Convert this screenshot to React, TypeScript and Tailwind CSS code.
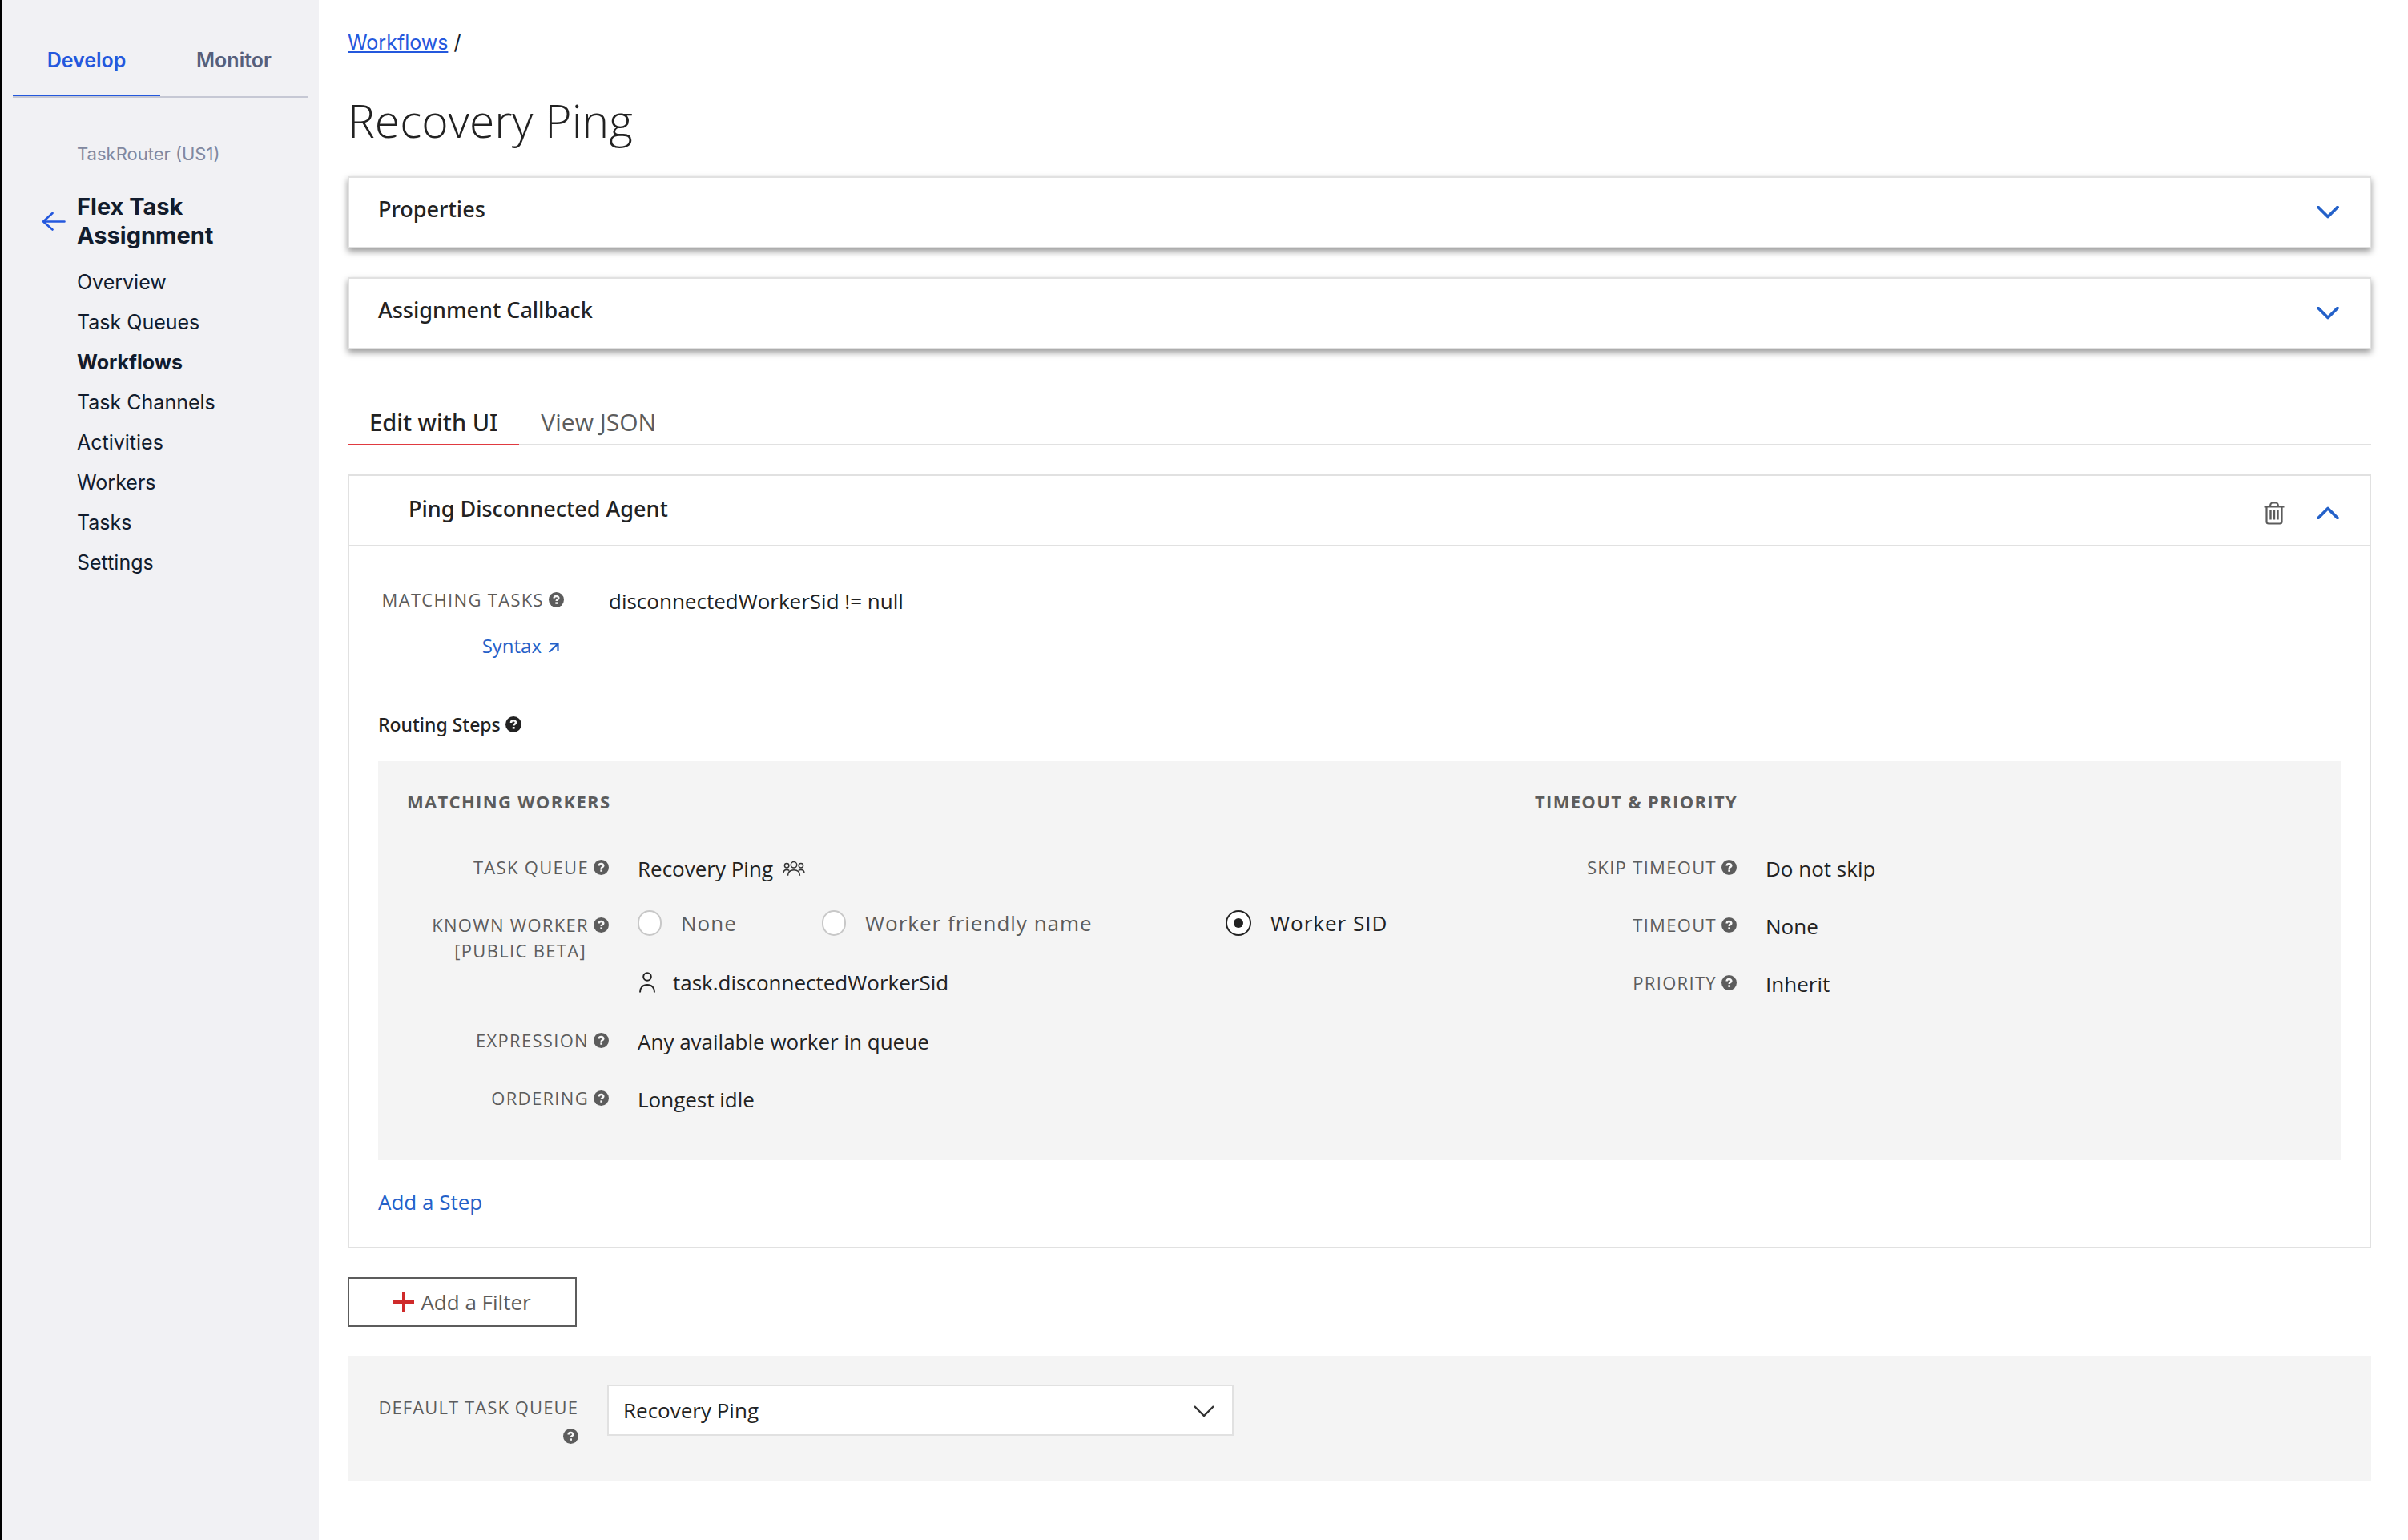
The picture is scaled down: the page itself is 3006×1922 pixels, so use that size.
import { useState, type ReactNode } from "react";

const navItems = [
  "Overview",
  "Task Queues",
  "Workflows",
  "Task Channels",
  "Activities",
  "Workers",
  "Tasks",
  "Settings",
];

function HelpIcon({ className = "size-[19px]" }: { className?: string }) {
  return (
    <svg viewBox="0 0 20 20" className={`inline-block shrink-0 ${className}`} role="img" aria-label="Help">
      <circle cx="10" cy="10" r="10" fill="currentColor" />
      <path
        d="M7 8C7 6.200 8.200 5.300 10 5.300s3 .9 3 2.300c0 1.200-.8 1.700-1.600 2.200-.8.500-1.200.9-1.200 1.800"
        fill="none"
        stroke="#f7f7f7"
        strokeWidth="2.600"
      />
      <rect x="8.800" y="13" width="2.800" height="2.600" fill="#f7f7f7" />
    </svg>
  );
}

function Chevron({ up = false }: { up?: boolean }) {
  return (
    <svg viewBox="0 0 28 16" className="h-4 w-7 shrink-0" aria-hidden="true">
      <path
        d={up ? "M2 14.5 14 2.5l12 12" : "M2 1.5l12 12 12-12"}
        fill="none"
        stroke="#2461c9"
        strokeWidth="3.800"
        strokeLinecap="round"
        strokeLinejoin="round"
      />
    </svg>
  );
}

function TrashIcon() {
  return (
    <svg viewBox="0 0 26 30" className="h-[30px] w-[26px]" fill="none" stroke="#5c5c5c" strokeWidth="2.200" aria-hidden="true">
      <path d="M.5 7.500h25M3.500 7.500V26q0 2.500 2.500 2.500h14q2.500 0 2.500-2.500V7.500" />
      <path d="M8 7.500q0-5 3-5h4q3 0 3 5" />
      <path d="M8.500 12v11.500M13 12v11.500M17.500 12v11.500" strokeWidth="2.400" />
    </svg>
  );
}

function PersonIcon() {
  return (
    <svg viewBox="0 0 20 26" className="h-[26px] w-5 shrink-0" fill="none" stroke="#222" strokeWidth="2" aria-hidden="true">
      <circle cx="10" cy="6" r="4.800" />
      <path d="M1 25.500c0-6 3.500-9.500 9-9.500s9 3.500 9 9.500" />
    </svg>
  );
}

function PeopleIcon() {
  return (
    <svg viewBox="0 0 30 20" className="h-5 w-7 shrink-0" fill="none" stroke="#333" strokeWidth="1.600" aria-hidden="true">
      <circle cx="15" cy="5" r="4" />
      <circle cx="5.500" cy="6" r="2.900" />
      <circle cx="24.500" cy="6" r="2.900" />
      <path d="M7 19.500c0-5 3-7.500 8-7.500s8 2.500 8 7.500" />
      <path d="M1 16.500c0-3 1.500-5 4.500-5 1.500 0 2.500.4 3.300 1.200M29 16.500c0-3-1.500-5-4.500-5-1.500 0-2.500.4-3.300 1.200" />
    </svg>
  );
}

function ClosedCard({ title }: { title: string }) {
  return (
    <button
      type="button"
      aria-expanded="false"
      className="flex h-[90px] w-full items-center justify-between border-2 border-[#e1e1e1] bg-white pr-[38px] pl-9 text-left shadow-[0_4px_8px_rgba(0,0,0,0.4)]"
    >
      <span className="pb-2 font-['Noto_Sans',sans-serif] text-[27px] leading-9 font-medium text-[#222]">{title}</span>
      <Chevron />
    </button>
  );
}

function Label({ children }: { children: ReactNode }) {
  return (
    <span className="block text-[22px] leading-8 tracking-[0.06em] whitespace-nowrap text-[#5c5c5c] uppercase">
      {children}
    </span>
  );
}

function Field({ label, note, children }: { label: string; note?: string; children: ReactNode }) {
  return (
    <div className="flex items-start gap-9">
      <dt className="w-[252px] shrink-0 text-right">
        <Label>
          <span className="flex items-center justify-end gap-1.5">
            {label}
            <HelpIcon />
          </span>
        </Label>
        {note && (
          <Label>
            <span className="pr-7">{note}</span>
          </Label>
        )}
      </dt>
      <dd className="min-w-0 flex-1 text-[26px] leading-9 text-[#222]">{children}</dd>
    </div>
  );
}

function Radio({
  name,
  label,
  checked,
  onChange,
}: {
  name: string;
  label: string;
  checked: boolean;
  onChange: () => void;
}) {
  return (
    <label
      className={`flex h-7 items-center gap-6 text-[26px] tracking-[1px] whitespace-nowrap ${
        checked ? "text-[#222]" : "text-[#5c5c5c]"
      }`}
    >
      <input
        type="radio"
        name={name}
        checked={checked}
        onChange={onChange}
        className="grid h-8 w-[30px] shrink-0 appearance-none place-items-center rounded-full border-2 border-[#c8c8c8] bg-white before:size-3 before:rounded-full checked:w-8 checked:border-[#222] checked:before:bg-[#222]"
      />
      {label}
    </label>
  );
}

function Sidebar() {
  return (
    <aside className="w-[398px] shrink-0 border-l-2 border-black bg-[#f1f1f4] px-3.5 font-[Inter,sans-serif] text-[#121c2d]">
      <div role="tablist" className="flex border-b-2 border-[#c6c8d4] text-[25px] leading-10 font-semibold">
        <button type="button" role="tab" aria-selected="true" className="flex-1 border-b-2 border-[#2458dd] pt-[55px] pb-[23px] text-[#2458dd]">
          Develop
        </button>
        <button type="button" role="tab" aria-selected="false" className="flex-1 border-b-2 border-transparent pt-[55px] pb-[23px] text-[#565f7b]">
          Monitor
        </button>
      </div>
      <div className="pl-20">
        <p className="mt-[54px] text-[22px] leading-8 text-[#8188a0]">TaskRouter (US1)</p>
        <div className="mt-8 -ml-11 flex items-center gap-3.5">
          <a href="#back" aria-label="Back">
            <svg viewBox="0 0 30 24" className="h-6 w-[30px]" fill="none" stroke="#2458dd" strokeWidth="2.600" strokeLinecap="round" strokeLinejoin="round">
              <path d="M28.500 12.500H2M13.500 2 2 12.500l11.500 10" />
            </svg>
          </a>
          <h2 className="text-[29px] leading-9 font-bold">
            Flex Task
            <br />
            Assignment
          </h2>
        </div>
        <nav className="mt-[15px]">
          <ul className="text-[25px] leading-[50px]">
            {navItems.map((item) => (
              <li key={item}>
                <a href="#nav" className={item === "Workflows" ? "font-bold" : ""}>
                  {item}
                </a>
              </li>
            ))}
          </ul>
        </nav>
      </div>
    </aside>
  );
}

export default function App() {
  const [worker, setWorker] = useState("Worker SID");

  return (
    <div className="flex min-h-screen bg-white font-['Open_Sans',sans-serif] text-[#222]">
      <Sidebar />
      <main className="min-w-0 flex-1 pt-[35px] pr-[46px] pl-9">
        <nav className="font-[Inter,sans-serif] text-[25px] leading-9 text-[#121c2d]">
          <a href="#workflows" className="text-[#2458dd] underline">
            Workflows
          </a>{" "}
          /
        </nav>
        <h1 className="mt-[43px] text-[57px] leading-[72px] font-light">Recovery Ping</h1>

        <div className="mt-[34px] flex flex-col gap-9">
          <ClosedCard title="Properties" />
          <ClosedCard title="Assignment Callback" />
        </div>

        <div role="tablist" className="mt-[71px] flex text-[30px] leading-10">
          <button
            type="button"
            role="tab"
            aria-selected="true"
            className="border-b-2 border-[#e03a40] px-[27px] pb-[7px] font-['Noto_Sans',sans-serif] text-[29px] font-medium"
          >
            Edit with UI
          </button>
          <button type="button" role="tab" aria-selected="false" className="border-b-2 border-[#e1e1e1] px-[27px] pb-[7px] text-[#5c5c5c]">
            View JSON
          </button>
          <div className="flex-1 border-b-2 border-[#e1e1e1]" />
        </div>

        <section className="mt-9 border-2 border-[#e1e1e1]">
          <header className="flex h-[88px] items-center border-b-2 border-[#e1e1e1] pr-[38px] pl-[74px]">
            <h2 className="flex-1 pb-1 font-['Noto_Sans',sans-serif] text-[27px] leading-9 font-medium">Ping Disconnected Agent</h2>
            <div className="flex items-center gap-10 pt-1.5">
              <button type="button" aria-label="Delete filter">
                <TrashIcon />
              </button>
              <button type="button" aria-label="Collapse filter" aria-expanded="true">
                <Chevron up />
              </button>
            </div>
          </header>

          <div className="px-9 pt-[50px] pb-[38px]">
            <div className="flex items-start gap-14">
              <div className="w-[232px] shrink-0 text-right">
                <Label>
                  <span className="flex items-center justify-end gap-1.5">
                    Matching Tasks
                    <HelpIcon />
                  </span>
                </Label>
                <a href="#syntax" className="mt-[26px] flex items-center justify-end gap-2 pr-1.5 text-2xl leading-8 text-[#2461c9]">
                  Syntax
                  <svg viewBox="0 0 14 14" className="mt-1 size-3.5" fill="none" stroke="currentColor" strokeWidth="2.200" aria-hidden="true">
                    <path d="M3 2.500h9.500V12M12 3 1.500 13" />
                  </svg>
                </a>
              </div>
              <p className="text-[26px] leading-9">disconnectedWorkerSid != null</p>
            </div>

            <h3 className="mt-[66px] flex items-center gap-1.5 font-['Noto_Sans',sans-serif] text-[23px] leading-8 font-medium">
              Routing Steps
              <HelpIcon className="size-5" />
            </h3>

            <div className="mt-[30px] grid grid-cols-[1408fr_970fr] bg-[#f4f4f4] px-9 pt-[34px] pb-[58px]">
              <section>
                <h4 className="text-[22px] leading-8 font-bold tracking-[0.06em] text-[#5c5c5c] uppercase">Matching Workers</h4>
                <dl className="mt-[50px] flex flex-col gap-9">
                  <Field label="Task Queue">
                    <span className="flex items-center gap-3">
                      Recovery Ping
                      <PeopleIcon />
                    </span>
                  </Field>
                  <Field label="Known Worker" note="[Public Beta]">
                    <div role="radiogroup" aria-label="Known worker" className="grid grid-cols-[230px_504px_auto]">
                      {["None", "Worker friendly name", "Worker SID"].map((option) => (
                        <Radio
                          key={option}
                          name="known-worker"
                          label={option}
                          checked={worker === option}
                          onChange={() => setWorker(option)}
                        />
                      ))}
                    </div>
                    <p className="mt-[42px] flex items-center gap-[22px] pb-0.5 pl-0.5">
                      <PersonIcon />
                      task.disconnectedWorkerSid
                    </p>
                  </Field>
                  <Field label="Expression">Any available worker in queue</Field>
                  <Field label="Ordering">Longest idle</Field>
                </dl>
              </section>
              <section>
                <h4 className="text-[22px] leading-8 font-bold tracking-[0.06em] text-[#5c5c5c] uppercase">Timeout &amp; Priority</h4>
                <dl className="mt-[50px] flex flex-col gap-9">
                  <Field label="Skip Timeout">Do not skip</Field>
                  <Field label="Timeout">None</Field>
                  <Field label="Priority">Inherit</Field>
                </dl>
              </section>
            </div>

            <button type="button" className="mt-[34px] block text-[26px] leading-9 text-[#2461c9]">
              Add a Step
            </button>
          </div>
        </section>

        <button
          type="button"
          className="mt-9 flex h-[62px] w-[286px] items-center justify-center gap-2 border-2 border-[#5c5c5c] text-[26px] leading-9 text-[#5c5c5c]"
        >
          <svg viewBox="0 0 26 26" className="size-[26px]" stroke="#cf2a2a" strokeWidth="4" aria-hidden="true">
            <path d="M13 0v26M0 13h26" />
          </svg>
          Add a Filter
        </button>

        <div className="mt-9 flex items-start gap-9 bg-[#f4f4f4] px-9 pt-9 pb-[38px]">
          <label htmlFor="default-queue" className="w-[252px] pt-2.5 text-right text-[22px] leading-9 tracking-wider text-[#5c5c5c]">
            <span className="block whitespace-nowrap">DEFAULT TASK QUEUE</span>
            <span className="flex h-9 items-center justify-end">
              <HelpIcon />
            </span>
          </label>
          <div className="grid w-[782px] items-center">
            <select
              id="default-queue"
              className="col-start-1 row-start-1 h-16 appearance-none border-2 border-[#e1e1e1] bg-white px-[18px] text-[26px] text-[#222]"
            >
              <option>Recovery Ping</option>
            </select>
            <svg viewBox="0 0 26 16" className="pointer-events-none col-start-1 row-start-1 mt-0.5 mr-6 h-4 w-[26px] justify-self-end" fill="none" stroke="#333" strokeWidth="2.400" aria-hidden="true">
              <path d="M1 2l12 12L25 2" />
            </svg>
          </div>
        </div>
      </main>
    </div>
  );
}
